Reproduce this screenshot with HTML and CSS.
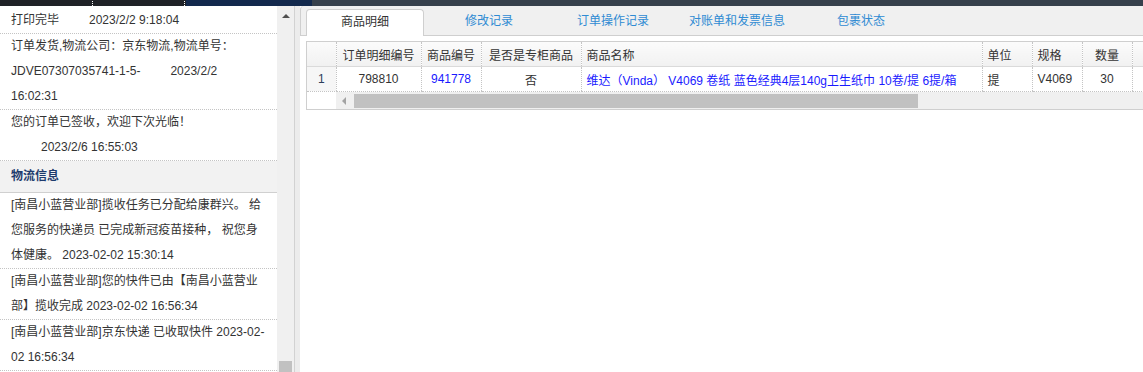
FILE: index.html
```html
<!DOCTYPE html>
<html lang="zh-CN">
<head>
    <meta charset="UTF-8">
    <title>订单详情</title>
    <link rel="stylesheet" href="styles.css">
</head>
<body>

<div class="topbar">
    <div class="seg seg-a"><span class="grip"></span><span class="grip"></span></div>
    <div class="seg seg-b"></div>
    <div class="seg seg-c"></div>
</div>

<div class="main">
    <!-- order log + logistics -->
    <aside class="side">
        <div class="side-body">
            <ul class="log">
                <li class="first">打印完毕<span class="time">2023/2/2 9:18:04</span></li>
                <li>订单发货,物流公司：京东物流,物流单号：<br>JDVE07307035741-1-5-<span class="time">2023/2/2</span><br>16:02:31</li>
                <li>您的订单已签收，欢迎下次光临！<br><span class="time">2023/2/6 16:55:03</span></li>
            </ul>
            <h3 class="side-title">物流信息</h3>
            <ul class="log">
                <li>[南昌小蓝营业部]揽收任务已分配给康群兴。 给<br>您服务的快递员 已完成新冠疫苗接种， 祝您身<br>体健康。 2023-02-02 15:30:14</li>
                <li>[南昌小蓝营业部]您的快件已由【南昌小蓝营业<br>部】揽收完成 2023-02-02 16:56:34</li>
                <li>[南昌小蓝营业部]京东快递 已收取快件 2023-02-<br>02 16:56:34</li>
            </ul>
        </div>
        <div class="vscroll">
            <span class="arrow-up"></span>
            <span class="vthumb"></span>
        </div>
    </aside>

    <div class="splitter"></div>

    <section class="panel">
        <nav class="tabs">
            <a class="tab active">商品明细</a>
            <a class="tab">修改记录</a>
            <a class="tab">订单操作记录</a>
            <a class="tab">对账单和发票信息</a>
            <a class="tab">包裹状态</a>
        </nav>

        <div class="tab-body">
            <div class="grid-wrap">
                <table class="grid">
                    <colgroup>
                        <col style="width:29px">
                        <col style="width:85px">
                        <col style="width:60px">
                        <col style="width:100px">
                        <col style="width:401px">
                        <col style="width:50px">
                        <col style="width:50px">
                        <col style="width:50px">
                        <col style="width:80px">
                    </colgroup>
                    <thead>
                    <tr>
                        <th class="rownum"></th>
                        <th class="c">订单明细编号</th>
                        <th class="c">商品编号</th>
                        <th class="c">是否是专柜商品</th>
                        <th>商品名称</th>
                        <th>单位</th>
                        <th>规格</th>
                        <th class="c">数量</th>
                        <th></th>
                    </tr>
                    </thead>
                    <tbody>
                    <tr>
                        <td class="rownum">1</td>
                        <td class="c">798810</td>
                        <td class="c link">941778</td>
                        <td class="c">否</td>
                        <td class="link">维达（Vinda） V4069 卷纸 蓝色经典4层140g卫生纸巾 10卷/提 6提/箱</td>
                        <td>提</td>
                        <td>V4069</td>
                        <td class="c">30</td>
                        <td></td>
                    </tr>
                    </tbody>
                </table>
                <div class="hscroll">
                    <span class="arrow-left"></span>
                    <span class="hthumb"></span>
                </div>
            </div>
        </div>
    </section>
</div>

</body>
</html>
```

FILE: styles.css
```css
body {
    margin: 0;
    width: 1143px;
    height: 372px;
    overflow: hidden;
    font-family: "Liberation Sans", "Noto Sans CJK SC", sans-serif;
    font-size: 12px;
    color: #333;
    background-color: #ececec;
    display: flex;
    flex-direction: column;
}

/* top strip */
.topbar {
    height: 6px;
    display: flex;
}

.seg-a {
    width: 186px;
    background-color: #1f2227;
    display: flex;
    justify-content: space-between;
    padding-left: 92px;
    box-sizing: border-box;
}

.seg-b {
    width: 126px;
    background-color: #13294d;
}

.seg-c {
    flex: 1;
    background-color: #36404c;
}

.grip {
    width: 1px;
    height: 5px;
    margin-top: 1px;
    border-left: 1px dotted #ffffff;
}

.main {
    flex: 1;
    display: flex;
    min-height: 0;
}

/* left column */
.side {
    width: 295px;
    display: flex;
    border-right: 1px solid #d2d2d2;
    box-sizing: border-box;
}

.side-body {
    width: 277px;
    background-color: #fff;
    overflow: hidden;
}

.log {
    list-style: none;
    margin: 0;
    padding: 0;
}

.log li {
    padding-left: 11px;
    line-height: 25px;
    white-space: nowrap;
    border-bottom: 1px dotted #c4c4c4;
}

.log li.first {
    padding-top: 2px;
}

.time {
    padding-left: 30px;
}

.side-title {
    margin: 0;
    padding-left: 11px;
    line-height: 31px;
    font-size: 12px;
    font-weight: bold;
    color: #1d3b6d;
    background-color: #f2f2f2;
    border-bottom: 1px solid #d0d0d0;
}

.vscroll {
    width: 17px;
    background-color: #f0f0f0;
    display: flex;
    flex-direction: column;
    align-items: center;
}

.arrow-up {
    margin-top: 8px;
    width: 0;
    height: 0;
    border-left: 4px solid transparent;
    border-right: 4px solid transparent;
    border-bottom: 4px solid #505050;
}

.vthumb {
    margin-top: auto;
    width: 13px;
    height: 11px;
    background-color: #c1c1c1;
}

.splitter {
    width: 5px;
    background-color: #ececec;
}

/* right column */
.panel {
    flex: 1;
    min-width: 0;
    background-color: #fff;
    display: flex;
    flex-direction: column;
}

.tabs {
    height: 26px;
    padding: 3px 0 0 5px;
    display: flex;
    background-color: #f0f0f0;
    border-left: 1px solid #cfcfcf;
    border-bottom: 1px solid #cfcfcf;
    border-top-left-radius: 4px;
}

.tab {
    width: 118px;
    margin-right: 6px;
    height: 26px;
    line-height: 25px;
    text-align: center;
    color: #2f8bd3;
    cursor: pointer;
}

.tab.active {
    background-color: #fff;
    color: #333;
    border: 1px solid #cfcfcf;
    border-bottom: none;
    border-radius: 4px 4px 0 0;
    box-sizing: border-box;
    margin-bottom: -1px;
    height: 27px;
}

.tab-body {
    flex: 1;
    padding: 5px 0 0 6px;
    overflow: hidden;
}

.grid-wrap {
    width: 906px;
    border-left: 1px solid #cfcfcf;
    border-top: 1px solid #cfcfcf;
    border-bottom: 1px solid #cfcfcf;
}

.grid {
    table-layout: fixed;
    width: 905px;
    border-collapse: collapse;
}

.grid th, .grid td {
    height: 24px;
    padding: 0 5px;
    text-align: left;
    white-space: nowrap;
    overflow: hidden;
    border-left: 1px dotted #c4c4c4;
}

.grid th:first-child, .grid td:first-child {
    border-left: none;
}

.grid th {
    font-weight: normal;
    color: #333;
    background: linear-gradient(#fbfbfb, #f1f1f1);
    border-bottom: 1px solid #dadada;
}

.grid td {
    border-bottom: 1px dotted #c4c4c4;
}

.grid .c {
    text-align: center;
}

.grid .rownum {
    text-align: center;
    padding: 0;
}

.grid td.rownum {
    background-color: #f6f6f6;
    color: #2d3d5a;
}

.grid .link {
    color: #1a1aff;
}

.hscroll {
    margin-left: 29px;
    height: 17px;
    background-color: #f0f0f0;
    display: flex;
    align-items: center;
}

.arrow-left {
    margin-left: 6px;
    width: 0;
    height: 0;
    border-top: 4px solid transparent;
    border-bottom: 4px solid transparent;
    border-right: 4px solid #a3a3a3;
}

.hthumb {
    margin-left: 8px;
    width: 564px;
    height: 14px;
    background-color: #c1c1c1;
}
```
